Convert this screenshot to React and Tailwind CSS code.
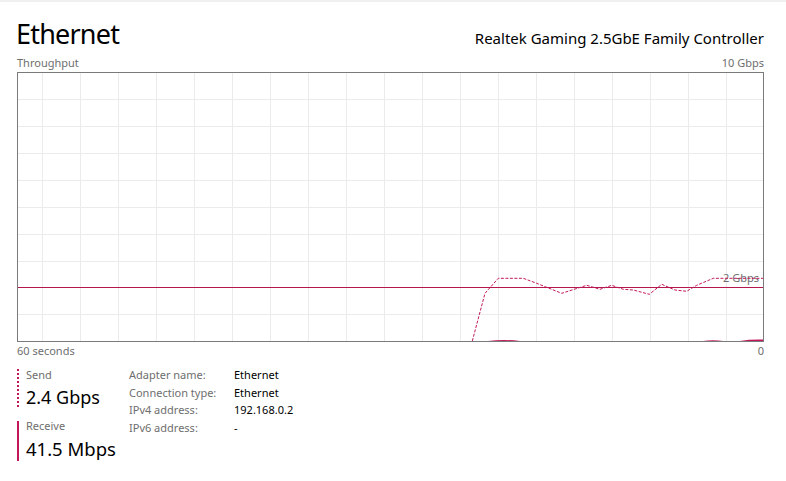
import React from "react";

const RED = "#c2185b";
const vLines = Array.from({ length: 19 }, (_, k) => 24.5 + 38 * k);
const hLines = [26.5, 53.5, 80.5, 107.5, 134.5, 161.5, 188.5, 241.5];

const sendPts = [
  [454.3, 268], [467, 220.3], [480.3, 205.3], [505.3, 205.3], [518.7, 210.3],
  [528.7, 214.3], [543.7, 220.3], [568.7, 212.3], [582, 216.3], [593.7, 212.3],
  [605.3, 216.3], [615.3, 217], [631.3, 221.3], [643.7, 211.3], [657, 217],
  [668.7, 218.3], [678.7, 212.3], [695.3, 205.3], [745, 205.3],
];

function Chart() {
  return (
    <svg width="745" height="268" viewBox="0 0 745 268" className="block">
      {vLines.map((x) => (
        <line key={"v" + x} x1={x} y1="0" x2={x} y2="268" stroke="#ebebeb" strokeWidth="1" />
      ))}
      {hLines.map((y) => (
        <line key={"h" + y} x1="0" y1={y} x2="745" y2={y} stroke="#ebebeb" strokeWidth="1" />
      ))}
      <line x1="0" y1="214.5" x2="745" y2="214.5" stroke="#b5164d" strokeWidth="1" />
      <text
        x="741"
        y="209"
        textAnchor="end"
        fontSize="11"
        fill="#6e6e6e"
        style={{ fontFamily: '"Noto Sans", sans-serif' }}
      >
        2 Gbps
      </text>
      <polyline
        points={sendPts.map((p) => p.join(",")).join(" ")}
        fill="none"
        stroke={RED}
        strokeWidth="1"
        strokeDasharray="3 1.5"
      />
      <path d="M470 268 Q486 266 502 268 Z" fill={RED} />
      <path d="M685 268 Q695 266.3 705 268 Z" fill={RED} />
      <path d="M722 268 Q732 266.3 745 266.6 L745 268 Z" fill={RED} />
    </svg>
  );
}

export default function App() {
  const rows = [
    ["Adapter name:", "Ethernet"],
    ["Connection type:", "Ethernet"],
    ["IPv4 address:", "192.168.0.2"],
    ["IPv6 address:", "-"],
  ];
  return (
    <div
      className="w-[786px] h-[481px] bg-white border-t-2 border-[#f0f0f0] overflow-hidden"
      style={{ fontFamily: '"Noto Sans", "Open Sans", sans-serif' }}
    >
      <div className="pl-[17px] pr-[22px] pt-[16px]">
        <div className="flex items-baseline justify-between h-[32px]">
          <div className="ml-[-1px] text-[27px] leading-[32px] tracking-[-0.8px] text-black">Ethernet</div>
          <div className="text-[15px] leading-[20px] text-black">
            Realtek Gaming 2.5GbE Family Controller
          </div>
        </div>
        <div className="mt-[6px] flex justify-between text-[11px] leading-[14px] text-[#6e6e6e]">
          <span>Throughput</span>
          <span>10 Gbps</span>
        </div>
        <div className="mt-[2px] w-[747px] h-[270px] border border-[#7a7a7a]">
          <Chart />
        </div>
        <div className="mt-[2px] flex justify-between text-[11px] leading-[14px] text-[#6e6e6e]">
          <span>60 seconds</span>
          <span>0</span>
        </div>
        <div className="flex mt-[10px]">
          <div className="w-[112px] flex flex-col">
            <div className="flex">
              <div className="w-[2px] my-px bg-[repeating-linear-gradient(to_bottom,#c2185b_0_2px,transparent_2px_4px)]" />
              <div className="pl-[7px]">
                <div className="text-[11px] leading-[14px] text-[#6e6e6e]">Send</div>
                <div className="mt-[3px] h-[24px] text-[18px] leading-[24px] text-black">2.4 Gbps</div>
              </div>
            </div>
            <div className="mt-[10px] flex">
              <div className="w-[2px] mt-[2px] bg-[#c2185b]" />
              <div className="pl-[7px]">
                <div className="text-[11px] leading-[14px] text-[#6e6e6e]">Receive</div>
                <div className="mt-[4px] h-[24px] text-[18.5px] leading-[24px] text-black">41.5 Mbps</div>
              </div>
            </div>
          </div>
          <div className="mt-[-2px] flex flex-col text-[11px] leading-[17.6px]">
            {rows.map(([k, v]) => (
              <div key={k} className="flex">
                <div className="w-[105px] text-[#6e6e6e]">{k}</div>
                <div className="text-black">{v}</div>
              </div>
            ))}
          </div>
        </div>
      </div>
    </div>
  );
}
